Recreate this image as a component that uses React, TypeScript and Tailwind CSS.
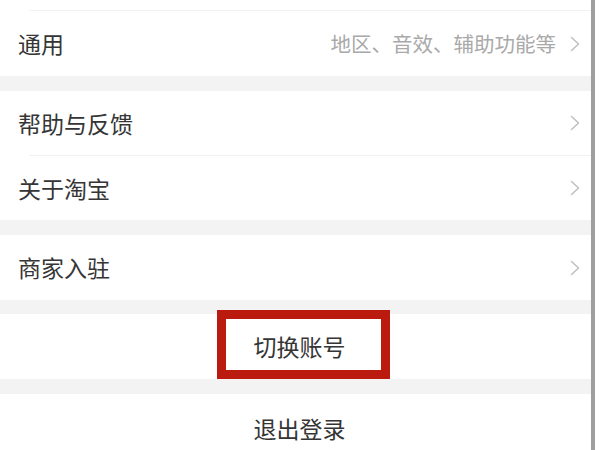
import React from 'react';

const Chevron = () => (
  <svg width="10" height="16" viewBox="0 0 10 16" className="shrink-0">
    <path d="M1.5 1.5 L8.5 8 L1.5 14.5" fill="none" stroke="#bdbdbd" strokeWidth="1.4" strokeLinecap="round" strokeLinejoin="round" />
  </svg>
);

interface RowProps {
  label: string;
  hint?: string;
  tall?: boolean;
}

const Row = ({ label, hint, tall }: RowProps) => (
  <div className={`${tall ? 'h-[65px]' : 'h-[64px]'} shrink-0 flex items-center bg-white pl-[18px] pr-[11px]`}>
    <span className="text-[23px] leading-none text-[#353535]">{label}</span>
    <div className="ml-auto flex items-center gap-[14px]">
      {hint && <span className="text-[20.5px] leading-none text-[#a9a9a9]">{hint}</span>}
      <Chevron />
    </div>
  </div>
);

const Divider = () => (
  <div className="h-px shrink-0 bg-white">
    <div className="ml-[29px] h-px bg-[#f1f1f1]"></div>
  </div>
);

export default function App() {
  return (
    <div
      className="relative w-[600px] h-[450px] overflow-hidden bg-white flex"
      style={{ fontFamily: '"Noto Sans CJK SC", "Noto Sans", sans-serif' }}
    >
      <div className="flex-1 flex flex-col">
        <div className="h-[10px] shrink-0 bg-white"></div>
        <Divider />
        <Row label="通用" hint="地区、音效、辅助功能等" tall />
        <div className="h-[15px] shrink-0 bg-[#f3f3f3]"></div>
        <Row label="帮助与反馈" />
        <Divider />
        <Row label="关于淘宝" />
        <div className="h-[15px] shrink-0 bg-[#f3f3f3]"></div>
        <Row label="商家入驻" tall />
        <div className="h-[14px] shrink-0 bg-[#f3f3f3]"></div>
        <div className="h-[65px] shrink-0 flex items-center justify-center bg-white">
          <span className="text-[23px] leading-none text-[#353535] ml-[8px]">切换账号</span>
        </div>
        <div className="h-[15px] shrink-0 bg-[#f3f3f3]"></div>
        <div className="h-[56px] shrink-0 flex items-center justify-center bg-white">
          <span className="text-[23px] leading-none text-[#353535] ml-[8px] mt-[12px]">退出登录</span>
        </div>
      </div>
      <div className="w-[4px] bg-[#9e9e9e]"></div>
      <div className="w-[5px] bg-white"></div>

      <div className="absolute left-[217px] top-[310px] w-[173px] h-[69px] border-[9px] border-[#bb1a0f]"></div>
    </div>
  );
}
